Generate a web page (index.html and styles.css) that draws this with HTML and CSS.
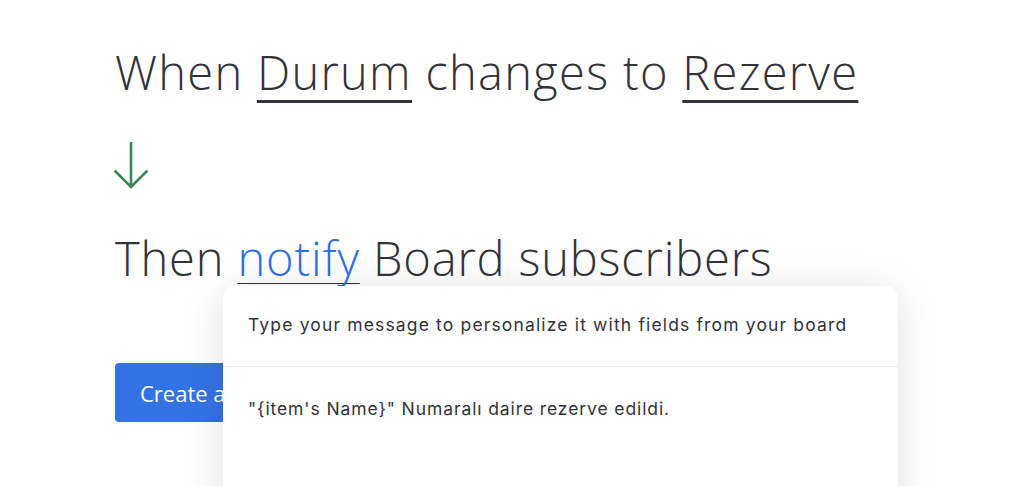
FILE: index.html
```html
<!DOCTYPE html>
<html>
<head>
<meta charset="utf-8">
<link rel="stylesheet" href="styles.css">
</head>
<body>
<main class="page">
  <h1 class="sentence">When <span class="field">Durum</span> changes to <span class="field">Rezerve</span></h1>
  <div class="arrow">
    <svg width="40" height="48" viewBox="0 0 40 48"><path d="M18 0 V45 M1.5 28.5 L18 45 L34.5 28.5" fill="none" stroke="#3b8657" stroke-width="2.6"/></svg>
  </div>
  <h1 class="sentence sentence-then">Then <span class="action">notify</span> Board subscribers</h1>
  <div class="actions">
    <button class="create">Create automation</button>
  </div>
</main>
<div class="popup">
  <div class="popup-head">Type your message to personalize it with fields from your board</div>
  <div class="popup-body">"{item's Name}" Numaralı daire rezerve edildi.</div>
</div>
</body>
</html>
```
FILE: styles.css
```css
html, body { margin: 0; padding: 0; background: #fff; }
body { width: 1016px; height: 486px; overflow: hidden; position: relative; font-family: "Open Sans", "Liberation Sans", sans-serif; color: #323338; }
.page { padding: 37px 0 0 115px; display: flex; flex-direction: column; align-items: flex-start; }
.sentence { margin: 0; font-weight: 300; font-size: 47px; letter-spacing: 1.3px; line-height: 70px; white-space: nowrap; }
.sentence-then { letter-spacing: 0.85px; }
.field { text-decoration: underline; text-decoration-thickness: 3px; text-underline-offset: 10px; }
.action { color: #3170e3; text-decoration: underline; text-decoration-color: #323338; text-decoration-thickness: 1px; text-underline-offset: 7px; text-decoration-skip-ink: none; }
.arrow { margin: 35px 0 0 -2px; height: 48px; }
.arrow svg { display: block; }
.sentence + .actions { margin-top: 70px; }
.arrow + .sentence { margin-top: 33px; }
.create { border: none; background: #3473e5; color: #fff; border-radius: 4px; height: 59px; padding: 0 25px; font-family: "Open Sans", sans-serif; font-size: 22px; font-weight: 400; white-space: nowrap; }
.popup { position: absolute; left: 223px; top: 286px; width: 675px; height: 260px; background: #fff; border-radius: 12px; box-shadow: 0 4px 40px rgba(0,0,0,0.12); font-family: "Inter", "Roboto", sans-serif; color: #323338; }
.popup-head { padding: 28px 25px 31px; line-height: 21px; border-bottom: 1px solid #e6e9ef; font-size: 17.5px; letter-spacing: 1.15px; }
.popup-body { padding: 31px 25px 0; line-height: 21px; font-size: 17.5px; letter-spacing: 0.9px; }
```
